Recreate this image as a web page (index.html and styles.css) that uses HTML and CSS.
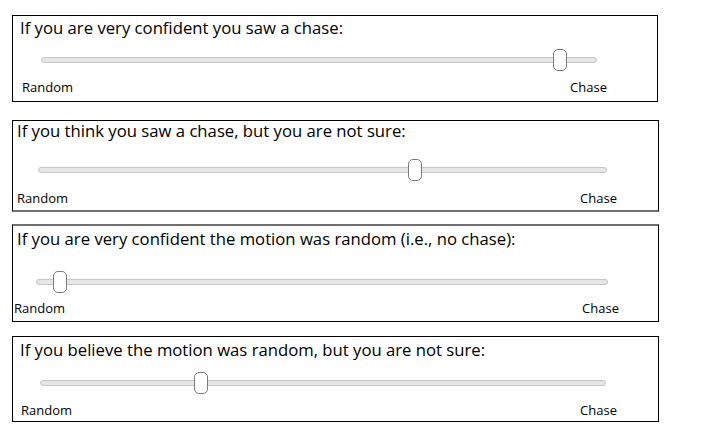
FILE: index.html
```html
<!DOCTYPE html>
<html>
<head>
<meta charset="utf-8">
<link rel="stylesheet" href="styles.css">
</head>
<body>
<main class="page">
  <section class="panel p1">
    <div class="q">If you are very confident you saw a chase:</div>
    <div class="slider"><div class="track"></div><div class="thumb" style="left:512px"></div></div>
    <div class="ends"><span>Random</span><span>Chase</span></div>
  </section>
  <section class="panel p2">
    <div class="q">If you think you saw a chase, but you are not sure:</div>
    <div class="slider"><div class="track"></div><div class="thumb" style="left:370px"></div></div>
    <div class="ends"><span>Random</span><span>Chase</span></div>
  </section>
  <section class="panel p3">
    <div class="q">If you are very confident the motion was random (i.e., no chase):</div>
    <div class="slider"><div class="track"></div><div class="thumb" style="left:17px"></div></div>
    <div class="ends"><span>Random</span><span>Chase</span></div>
  </section>
  <section class="panel p4">
    <div class="q">If you believe the motion was random, but you are not sure:</div>
    <div class="slider"><div class="track"></div><div class="thumb" style="left:154px"></div></div>
    <div class="ends"><span>Random</span><span>Chase</span></div>
  </section>
</main>
</body>
</html>
```
FILE: styles.css
```css
html, body {
  margin: 0;
  padding: 0;
  background: #fff;
}
.page {
  display: flex;
  flex-direction: column;
  align-items: flex-start;
  padding: 15px 0 0 12px;
}
.panel {
  box-sizing: border-box;
  width: 646px;
  border: 1px solid #000;
  display: flex;
  flex-direction: column;
  color: #000;
}
.q {
  font-family: "Open Sans", sans-serif;
  font-size: 16.7px;
  line-height: 20px;
  padding-left: var(--qx);
  padding-top: var(--qy);
}
.slider {
  position: relative;
  height: 22px;
  display: flex;
  align-items: center;
  margin: var(--sg) var(--tr) 0 var(--tl);
}
.track {
  flex: 1;
  height: 6px;
  box-sizing: border-box;
  background: #e6e6e6;
  border: 1px solid #c6c6c6;
  border-radius: 3px;
}
.thumb {
  position: absolute;
  top: 0;
  width: 14px;
  height: 22px;
  box-sizing: border-box;
  background: #fff;
  border: 1px solid #7d7d7d;
  border-radius: 5px;
}
.ends {
  display: flex;
  justify-content: space-between;
  font-family: "Open Sans", sans-serif;
  font-size: 13px;
  line-height: 16px;
  color: #000;
  margin-top: var(--lg);
  padding: 0 var(--er) var(--eb) var(--el);
}
.p1 {
  width: 646px;
  --qx: 7px; --qy: 2px; --sg: 11px; --tl: 28px; --tr: 60px;
  --lg: 8px; --el: 9px; --er: 50px; --eb: 6px;
}
.p2 {
  width: 647px;
  margin-top: 18px;
  border-bottom: 2px solid #6f6f6f;
  --qx: 4px; --qy: 0px; --sg: 18px; --tl: 25px; --tr: 51px;
  --lg: 9px; --el: 4px; --er: 41px; --eb: 4px;
}
.p3 {
  width: 647px;
  margin-top: 12px;
  border-top: 2px solid #6f6f6f;
  --qx: 4px; --qy: 3px; --sg: 22px; --tl: 23px; --tr: 50px;
  --lg: 7px; --el: 1px; --er: 39px; --eb: 5px;
}
.p4 {
  width: 647px;
  margin-top: 14px;
  --qx: 7px; --qy: 3px; --sg: 12px; --tl: 27px; --tr: 52px;
  --lg: 8px; --el: 8px; --er: 41px; --eb: 3px;
}
```
